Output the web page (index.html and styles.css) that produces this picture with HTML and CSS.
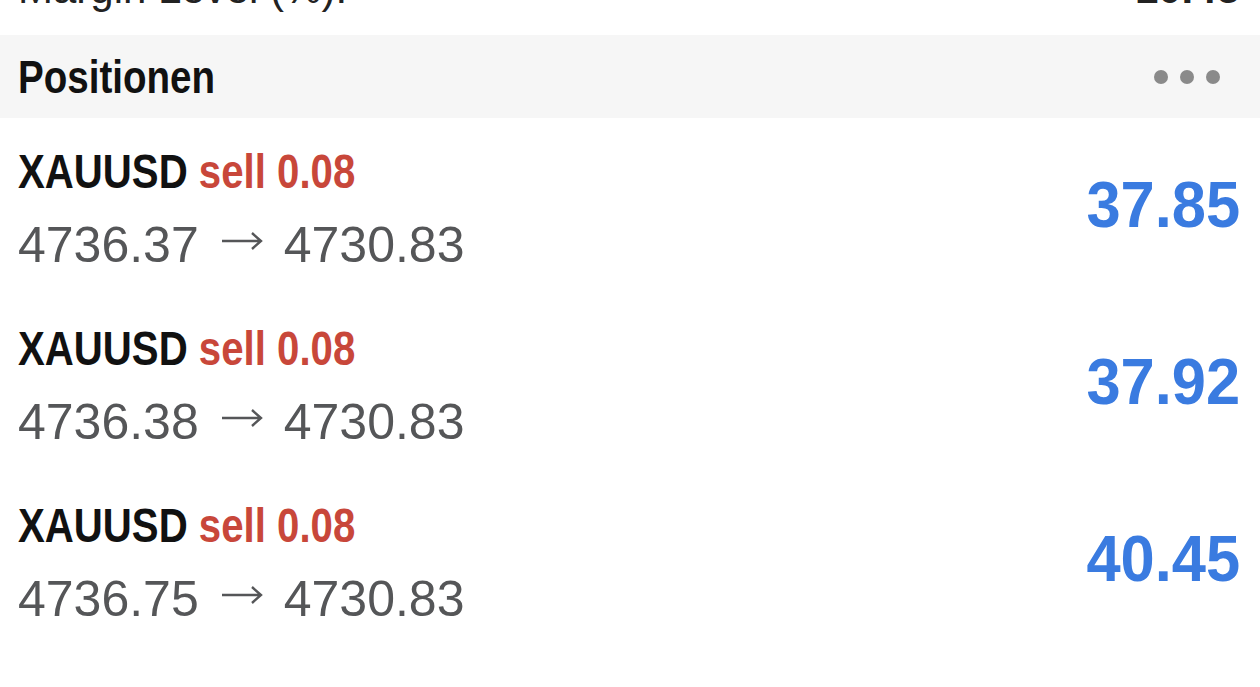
FILE: index.html
```html
<!DOCTYPE html>
<html lang="de">
<head>
    <meta charset="UTF-8">
    <meta name="viewport" content="width=device-width, initial-scale=1.0">
    <title>Positionen</title>
    <link rel="stylesheet" href="styles.css">
</head>
<body>

<div class="summary-row">
    <span class="summary-label">Margin Level (%):</span>
    <span class="summary-value">10.45</span>
</div>

<div class="section-head">
    <h2>Positionen</h2>
    <div class="more-dots">
        <i></i><i></i><i></i>
    </div>
</div>

<ul class="positions">
    <li class="position">
        <div class="position-info">
            <p class="position-title"><span class="symbol">XAUUSD</span> <span class="side">sell 0.08</span></p>
            <p class="position-prices">4736.37<svg class="arrow" viewBox="0 0 42 20"><path d="M1 10H40M31 2L40 10L31 18"/></svg>4730.83</p>
        </div>
        <div class="position-profit">37.85</div>
    </li>
    <li class="position">
        <div class="position-info">
            <p class="position-title"><span class="symbol">XAUUSD</span> <span class="side">sell 0.08</span></p>
            <p class="position-prices">4736.38<svg class="arrow" viewBox="0 0 42 20"><path d="M1 10H40M31 2L40 10L31 18"/></svg>4730.83</p>
        </div>
        <div class="position-profit">37.92</div>
    </li>
    <li class="position">
        <div class="position-info">
            <p class="position-title"><span class="symbol">XAUUSD</span> <span class="side">sell 0.08</span></p>
            <p class="position-prices">4736.75<svg class="arrow" viewBox="0 0 42 20"><path d="M1 10H40M31 2L40 10L31 18"/></svg>4730.83</p>
        </div>
        <div class="position-profit">40.45</div>
    </li>
</ul>

</body>
</html>
```

FILE: styles.css
```css
* {
    margin: 0;
    padding: 0;
    box-sizing: border-box;
}

body {
    font-family: 'Liberation Sans', Arial, sans-serif;
    background-color: #fff;
    color: #222;
    overflow: hidden;
}

/* top row, mostly scrolled out of view */
.summary-row {
    height: 35px;
    display: flex;
    justify-content: space-between;
    align-items: flex-end;
    padding: 0 20px 25px 18px;
    overflow: hidden;
    font-size: 42px;
    line-height: 1;
}

.summary-value {
    font-weight: 700;
}

.section-head {
    height: 83px;
    background-color: #f6f6f6;
    display: flex;
    justify-content: space-between;
    align-items: center;
    padding: 0 40px 0 18px;
}

.section-head h2 {
    font-weight: 700;
    font-size: 47px;
    color: #111;
    transform: scaleX(0.82);
    transform-origin: left center;
}

.more-dots {
    display: flex;
    gap: 12px;
}

.more-dots i {
    width: 14px;
    height: 14px;
    border-radius: 50%;
    background-color: #8a8a8a;
}

.positions {
    list-style: none;
}

.position {
    height: 177px;
    display: flex;
    justify-content: space-between;
    align-items: center;
    padding: 7px 20px 0 18px;
}

.position-title {
    font-weight: 700;
    font-size: 49px;
    line-height: 1.3;
    color: #111;
    white-space: nowrap;
    transform: scaleX(0.82);
    transform-origin: left center;
}

.position-title .side {
    color: #c8473a;
}

.position-prices {
    font-size: 50px;
    line-height: 1.4;
    margin-top: 7px;
    color: #555658;
    white-space: nowrap;
}

.position-prices .arrow {
    width: 42px;
    height: 20px;
    margin: 0 21px 0 22px;
    vertical-align: 11px;
    fill: none;
    stroke: #555658;
    stroke-width: 2.4;
}

.position-profit {
    font-weight: 700;
    font-size: 64px;
    line-height: 1;
    margin-top: -10px;
    color: #3a7be0;
    transform: scaleX(0.96);
    transform-origin: right center;
}
```
